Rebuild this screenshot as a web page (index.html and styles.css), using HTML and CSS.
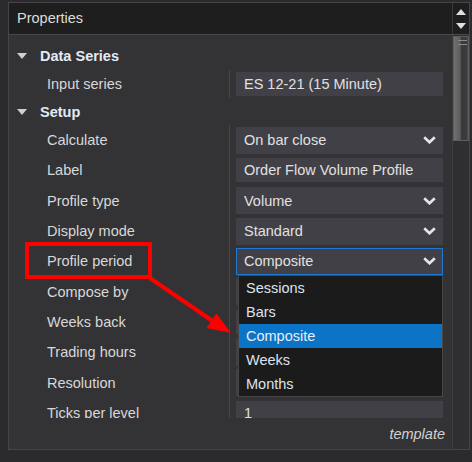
FILE: index.html
```html
<!DOCTYPE html>
<html>
<head>
<meta charset="utf-8">
<link rel="stylesheet" href="styles.css">
</head>
<body>
<div class="panel">
  <div class="header">
    <div class="title">Properties</div>
    <div class="spin">
      <svg width="10" height="6" viewBox="0 0 10 6"><polygon points="0,6 10,6 5,0" fill="#e0e0e0"/></svg>
      <svg width="10" height="6" viewBox="0 0 10 6"><polygon points="0,0 10,0 5,6" fill="#e0e0e0"/></svg>
    </div>
  </div>
  <div class="body">
    <div class="main">
      <div class="grid">
        <div class="cat"><svg class="tri" width="10" height="6" viewBox="0 0 10 6"><polygon points="0,0 10,0 5,6" fill="#cfcfcf"/></svg><span>Data Series</span></div>
        <div class="prop first"><div class="name">Input series</div><div class="val"><div class="box text">ES 12-21 (15 Minute)</div></div></div>
        <div class="cat short"><svg class="tri" width="10" height="6" viewBox="0 0 10 6"><polygon points="0,0 10,0 5,6" fill="#cfcfcf"/></svg><span>Setup</span></div>
        <div class="prop"><div class="name">Calculate</div><div class="val"><div class="box sel"><span>On bar close</span><svg class="chev" width="13" height="8" viewBox="0 0 13 8"><polyline points="1.2,1.2 6.5,6.3 11.8,1.2" fill="none" stroke="#e6e6e6" stroke-width="2.6"/></svg></div></div></div>
        <div class="prop"><div class="name">Label</div><div class="val"><div class="box text">Order Flow Volume Profile</div></div></div>
        <div class="prop"><div class="name">Profile type</div><div class="val"><div class="box sel"><span>Volume</span><svg class="chev" width="13" height="8" viewBox="0 0 13 8"><polyline points="1.2,1.2 6.5,6.3 11.8,1.2" fill="none" stroke="#e6e6e6" stroke-width="2.6"/></svg></div></div></div>
        <div class="prop"><div class="name">Display mode</div><div class="val"><div class="box sel"><span>Standard</span><svg class="chev" width="13" height="8" viewBox="0 0 13 8"><polyline points="1.2,1.2 6.5,6.3 11.8,1.2" fill="none" stroke="#e6e6e6" stroke-width="2.6"/></svg></div></div></div>
        <div class="prop"><div class="name">Profile period</div><div class="val open"><div class="box sel focus"><span>Composite</span><svg class="chev" width="13" height="8" viewBox="0 0 13 8"><polyline points="1.2,1.2 6.5,6.3 11.8,1.2" fill="none" stroke="#e6e6e6" stroke-width="2.6"/></svg></div>
          <ul class="list">
            <li>Sessions</li>
            <li>Bars</li>
            <li class="hl">Composite</li>
            <li>Weeks</li>
            <li>Months</li>
          </ul>
        </div></div>
        <div class="prop"><div class="name">Compose by</div><div class="val"><div class="box sel"></div></div></div>
        <div class="prop"><div class="name">Weeks back</div><div class="val"><div class="box text"></div></div></div>
        <div class="prop"><div class="name">Trading hours</div><div class="val"><div class="box sel"></div></div></div>
        <div class="prop"><div class="name">Resolution</div><div class="val"><div class="box sel"></div></div></div>
        <div class="prop"><div class="name">Ticks per level</div><div class="val"><div class="box text">1</div></div></div>
      </div>
      <div class="footer">template</div>
    </div>
    <div class="scroll"><div class="thumb"><i></i><i></i></div></div>
  </div>
</div>
<div class="mark"></div>
<svg class="arrow" width="472" height="462" viewBox="0 0 472 462">
  <line x1="150" y1="278" x2="214" y2="322" stroke="#ff0000" stroke-width="4"/>
  <polygon points="231,333 206.5,328 216.5,313.5" fill="#ff0000"/>
</svg>
</body>
</html>
```
FILE: styles.css
```css
html, body {
  margin: 0;
  padding: 0;
}
body {
  position: relative;
  width: 472px;
  height: 462px;
  background: #2b2b2d;
  font-family: "Liberation Sans", Arial, sans-serif;
  font-size: 14.5px;
  color: #dedede;
  overflow: hidden;
}
.panel {
  position: absolute;
  left: 8px;
  top: 2px;
  width: 460px;
  height: 446px;
  border: 1px solid #464648;
  background: #333336;
  display: flex;
  flex-direction: column;
}
.header {
  height: 31px;
  flex: none;
  background: #1e1e1e;
  border-bottom: 1px solid #48484a;
  display: flex;
}
.title {
  flex: 1;
  padding-left: 8px;
  line-height: 31px;
  color: #dcdcdc;
}
.spin {
  width: 16px;
  border-left: 1px solid #3a3a3c;
  display: flex;
  flex-direction: column;
  align-items: center;
  padding-top: 6px;
  gap: 8px;
}
.spin svg { display: block; }
.body {
  flex: 1;
  display: flex;
  min-height: 0;
}
.main {
  flex: 1;
  display: flex;
  flex-direction: column;
  min-width: 0;
}
.grid {
  height: 376px;
  padding-top: 7px;
  overflow: hidden;
  flex: none;
}
.cat {
  height: 28px;
  display: flex;
  align-items: center;
  font-weight: bold;
  color: #e4eaf4;
}
.cat.short { height: 27px; }
.cat .tri {
  margin-left: 8px;
  margin-right: 13px;
  display: block;
}
.prop {
  height: 30.3px;
  display: flex;
}
.prop.first { height: 28px; }
.name {
  width: 182px;
  padding-left: 38px;
  border-right: 1px solid #464648;
  display: flex;
  align-items: center;
  color: #d8d8d8;
}
.val {
  flex: 1;
  padding: 0 9px 0 6px;
  display: flex;
  align-items: center;
  position: relative;
}
.box {
  flex: 1;
  background: #414047;
  display: flex;
  align-items: center;
  padding-left: 8px;
  box-sizing: border-box;
  color: #e0e0e0;
  white-space: nowrap;
}
.box.text { height: 24px; }
.box.sel { height: 27px; padding-right: 7px; }
.box.sel span { flex: 1; }
.box.focus {
  border: 1px solid #1d7ad4;
  padding-left: 7px;
  padding-right: 6px;
}
.chev { display: block; }
.list {
  position: absolute;
  left: 8px;
  right: 9px;
  top: 28.5px;
  margin: 0;
  padding: 0;
  list-style: none;
  background: #1b1b1c;
  border: 1px solid #47474a;
  z-index: 2;
}
.list li {
  height: 24px;
  line-height: 24px;
  padding-left: 7px;
  color: #dde3ec;
}
.list li.hl {
  background: #0b74c6;
  color: #e8eef6;
}
.footer {
  flex: 1;
  display: flex;
  align-items: center;
  justify-content: flex-end;
  padding-right: 7px;
  font-style: italic;
  color: #d2d2d2;
}
.scroll {
  width: 16px;
  border-left: 1px solid #3e3e40;
  background: #2f2f31;
}
.thumb {
  height: 100px;
  margin: 1px 0 0 0;
  border: 1px solid #5c5c5e;
  background: linear-gradient(to right, #707070 0%, #5c5c5c 45%, #3a3a3c 52%, #3a3a3c 88%, #505050 100%);
  padding-top: 3px;
  box-sizing: content-box;
}
.thumb i {
  display: block;
  height: 1px;
  margin: 0 1px 3px 4px;
  background: #8a8a8a;
}
.mark {
  position: absolute;
  left: 25px;
  top: 242px;
  width: 119px;
  height: 29px;
  border: 4px solid #ff0000;
  z-index: 3;
}
.arrow {
  position: absolute;
  left: 0;
  top: 0;
  z-index: 4;
  pointer-events: none;
}
```
